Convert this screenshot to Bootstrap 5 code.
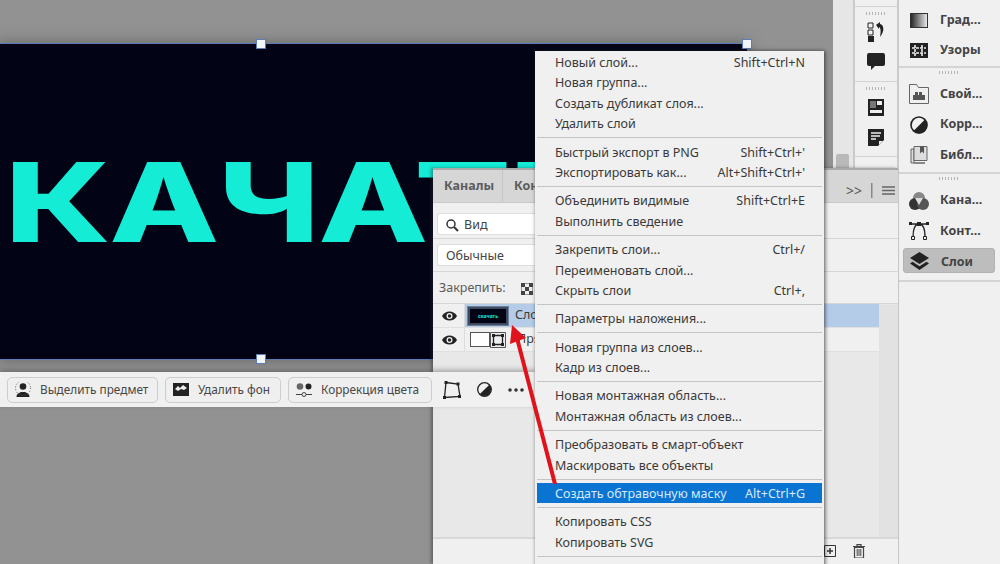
<!DOCTYPE html>
<html lang="ru">
<head>
    <meta charset="UTF-8">
    <title>Создать обтравочную маску</title>
    <link href="https://cdn.jsdelivr.net/npm/bootstrap@5.3.3/dist/css/bootstrap.min.css" rel="stylesheet">
    <style>
        html, body { margin: 0; background: #929292; overflow: hidden; }
        body { font-family: "Noto Sans", "Open Sans", sans-serif; color: #3c3c3c; font-size: 12.5px; }
        .stage { position: relative; width: 1000px; height: 564px; overflow: hidden; }
        .workspace { width: 833px; background: #929292; }
        .strip { width: 20px; background: #e6e6e6; position: relative; }
        .strip-thumb { position: absolute; left: 3px; top: 154px; width: 13px; height: 15px; background: #b9b9b9; border-radius: 2px; }
        .dock-thin { width: 46px; background: #f0f0f0; border-left: 2px solid #cbcbcb; border-right: 2px solid #cbcbcb; }
        .dock-wide { width: 101px; background: #f0f0f0; }
        .dock-thin-group { height: 75px; border-bottom: 1px solid #d2d2d2; padding-top: 5px; }
        .dock-thin-group:first-child { height: 7px; padding: 0; }
        .dock-thin-group svg { display: block; margin: 0 auto 11px; }
        .dock-thin-group.is-roomy svg { margin-bottom: 13px; }
        .dock-thin-group.is-roomy .grip { margin-bottom: 9px; }
        .grip { height: 3px; width: 21px; margin: 0 auto 7px; background: repeating-linear-gradient(90deg, #b5b5b5 0 1px, transparent 1px 3px); }
        .dock-wide-group { border-bottom: 2px solid #d4d4d4; padding: 3px 5px 1px 4px; }
        .dock-wide-group:first-child { padding: 5px 5px 0 4px; }
        .dock-wide-group:last-child { padding-bottom: 7px; }
        .dock-wide-group .grip { margin-bottom: 5px; }
        .dock-wide-group:last-child .grip { margin-bottom: 6px; }
        .dock-item { height: 30.5px; padding-left: 7px; gap: 12px; font-weight: 700; font-size: 12.5px; color: #444; border-radius: 3px; }
        .dock-item svg { flex: none; }
        .dock-item svg[width="20"] { margin: 0 -1px; }
        .dock-item.is-active { height: 25px; margin-top: 1.5px; padding: 3px 0 0 6px; background: #bdbdbd; border: 1px solid #b2b2b2; }
        .dock-item.is-active svg { margin-top: -3px; }

        .art { position: absolute; left: -2px; top: 43px; width: 750px; height: 317px; background: #020314; border: 1px solid #5d7cb4; box-shadow: 0 0 14px rgba(60,60,60,.55); overflow: hidden; }
        .art-title { position: absolute; left: 6px; top: 103px; font-family: Inter, sans-serif; font-weight: 800; font-size: 110px; line-height: 1; letter-spacing: -1px; color: #14ecd6; white-space: nowrap; transform: scaleX(1.3); transform-origin: left top; }
        .handle { position: absolute; width: 10px; height: 10px; background: #f2f5fc; border: 1px solid #5d7cb4; }

        .taskbar { position: absolute; left: 0; top: 372px; width: 536px; height: 35px; background: #f0f0f0; padding-left: 7px; gap: 7px; box-shadow: 0 -2px 5px rgba(60,60,60,.4); }
        .task-btn { height: 26px; padding: 0 0 0 7px; gap: 9px; background: #efefef; border: 1px solid #cdcdcd; border-radius: 5px; color: #474747; white-space: nowrap; --bs-btn-font-size: 11.8px; }
        .task-icons { gap: 16px; margin-left: 4px; }

        .layers { position: absolute; left: 433px; top: 168px; width: 465px; height: 396px; background: #e8e8e8; border-top: 2px solid #a9a9a9; box-shadow: -2px 0 3px rgba(40,40,40,.45); }
        .layers-tabs { height: 33px; background: #d6d6d6; border-bottom: 1px solid #c8c8c8; }
        .tab-name { padding: 0 8px 0 11px; height: 100%; border-right: 1px solid #c6c6c6; font-weight: 700; color: #5c5c5c; font-size: 12.5px; white-space: nowrap; }
        .tab-clip { width: 38px; overflow: hidden; border-right: 0; padding-right: 0; }
        .layers-tools { position: absolute; left: 413px; top: 10px; gap: 9px; color: #555; font-size: 14px; }
        .tool-row { background: #f0f0f0; border-bottom: 1px solid #d6d6d6; padding-left: 4px; }
        .tool-field { width: 98px; height: 22px; background: #fff; border: 1px solid #dedede; border-right: 0; border-radius: 3px 0 0 3px; padding: 2px 0 0 8px; gap: 5px; color: #444; }
        .layer-row { height: 24px; width: 446px; background: #f0f0f0; border-bottom: 1px solid #e0e0e0; }
        .layer-row.is-picked .layer-body { background: #b5cce8; }
        .eye-cell { width: 32px; border-right: 1px solid #dcdcdc; height: 100%; padding-left: 9px; flex: none; }
        .layer-body { padding-left: 3px; height: 100%; gap: 7px; min-width: 0; }
        .layer-thumb { width: 40px; height: 18px; flex: none; background: #020314; border: 2px solid #3e4a5e; outline: 1px solid #6d7f99; font-size: 5px; line-height: 14px; color: #14ecd6; text-align: center; font-weight: 700; }
        .layer-fill { width: 20px; height: 15px; background: #fff; border: 1px solid #555; }
        .layer-name { width: 20px; overflow: hidden; white-space: nowrap; }
        .layer-spacer { position: absolute; left: 446px; top: 135px; width: 19px; height: 259px; background: #e2e2e2; }
        .layers-foot { position: absolute; left: 0; right: 0; bottom: 0; height: 27px; background: #f0f0f0; border-top: 2px solid #d8d8d8; }
        .foot-icons { position: absolute; left: 391px; top: 5px; gap: 17px; }

        .ctx-menu { position: absolute; left: 535px; top: 51px; width: 289px; height: 520px; display: block; background: #f0f0f0; padding: 1px 2px; margin: 0; border: 0; border-radius: 0; box-shadow: 1px 0 4px rgba(30,30,30,.75); --bs-dropdown-min-width: 0; }
        .ctx-menu .dropdown-item { display: flex; justify-content: space-between; height: 20.4px; line-height: 22px; padding: 0 17px 0 18px; font-size: 12.5px; color: #3a3a3a; white-space: nowrap; background: transparent; }
        .ctx-menu .dropdown-item.active { background: #0a74d3; color: #d8e9fb; }
        .ctx-menu .dropdown-divider { margin: 3.5px 0; height: 1px; border: 0; background: #c4c4c4; opacity: 1; }
        .arrow-over { position: absolute; left: 0; top: 0; z-index: 1001; pointer-events: none; }
    </style>
</head>
<body>
<div class="stage d-flex">
    <div class="workspace"></div>
    <div class="strip"><div class="strip-thumb"></div></div>

    <div class="dock-thin">
        <div class="dock-thin-group"></div>
        <div class="dock-thin-group">
            <div class="grip"></div>
            <svg width="18" height="20" viewBox="0 0 18 20"><path d="M1 1h5v5H1zM1 8h5v5H1z" fill="#f0f0f0" stroke="#222"/><path d="M1 14h6v6H1z" fill="#222"/><path d="M9 3l4-3v2c4 1 5 7 0 13 1-5 1-9-1-10v2z" fill="#222"/></svg>
            <svg width="18" height="17" viewBox="0 0 18 17"><path d="M2 0h14a2 2 0 0 1 2 2v9a2 2 0 0 1-2 2H8l-4 4v-4H2a2 2 0 0 1-2-2V2a2 2 0 0 1 2-2z" fill="#222"/></svg>
        </div>
        <div class="dock-thin-group is-roomy">
            <div class="grip"></div>
            <svg width="16" height="17" viewBox="0 0 16 17"><path d="M0 0h16v17H0z" fill="#222"/><path d="M2 2h6v7H2z" fill="#777"/><path d="M9 2h5v4H9z" fill="#eee"/><path d="M2 11h12v3H2z" fill="#eee"/></svg>
            <svg width="16" height="17" viewBox="0 0 16 17"><path d="M0 0h16v11l-6 6H0z" fill="#222"/><path d="M3 4h10M3 7h9M3 10h5" stroke="#eee" stroke-width="1.3"/><path d="M11 16v-4h4z" fill="#eee"/></svg>
        </div>
    </div>

    <div class="dock-wide">
        <div class="dock-wide-group">
            <div class="dock-item d-flex align-items-center">
                <svg width="18" height="15" viewBox="0 0 18 15"><defs><linearGradient id="gradSwatch"><stop offset="0" stop-color="#222"/><stop offset="1" stop-color="#eee"/></linearGradient></defs><rect x=".5" y=".5" width="17" height="14" fill="url(#gradSwatch)" stroke="#333"/></svg>
                <span>Град...</span>
            </div>
            <div class="dock-item d-flex align-items-center">
                <svg width="18" height="15" viewBox="0 0 18 15"><path d="M0 0h18v15H0z" fill="#222"/><path d="M5 2v11M12 2v11M2 5h14M2 10h14" stroke="#eee" stroke-width="1.6" stroke-dasharray="3 1"/></svg>
                <span>Узоры</span>
            </div>
        </div>
        <div class="dock-wide-group">
            <div class="grip"></div>
            <div class="dock-item d-flex align-items-center">
                <svg width="20" height="20" viewBox="0 0 20 20"><path d="M.5 19.500V.5h7l2 3h10v16z" fill="#f0f0f0" stroke="#666"/><path d="M4 16v-5h2V8h3v3h1V8h3v3h3v5z" fill="#555"/></svg>
                <span>Свой...</span>
            </div>
            <div class="dock-item d-flex align-items-center">
                <svg width="18" height="18" viewBox="0 0 18 18"><circle cx="9" cy="9" r="8" fill="#f0f0f0" stroke="#222" stroke-width="1.6"/><path d="M15 3.400A8 8 0 0 1 3.400 15z" fill="#222"/></svg>
                <span>Корр...</span>
            </div>
            <div class="dock-item d-flex align-items-center">
                <svg width="18" height="18" viewBox="0 0 18 18"><path d="M1 3h3v14h11v-0H1z" fill="#ddd" stroke="#666"/><path d="M4 .5h13v14H4z" fill="#ddd" stroke="#666"/><path d="M10 .5h4v7l-2-2-2 2z" fill="#555"/></svg>
                <span>Библ...</span>
            </div>
        </div>
        <div class="dock-wide-group">
            <div class="grip"></div>
            <div class="dock-item d-flex align-items-center">
                <svg width="20" height="18" viewBox="0 0 20 18"><circle cx="10" cy="6" r="6" fill="#888"/><circle cx="6" cy="12" r="6" fill="#333"/><circle cx="14" cy="12" r="6" fill="#555"/><path d="M6 6h8l-4 7z" fill="#ddd"/></svg>
                <span>Кана...</span>
            </div>
            <div class="dock-item d-flex align-items-center">
                <svg width="20" height="18" viewBox="0 0 20 18"><path d="M4 15C4 7 6 2 10 2s6 5 6 13M1 2h18" fill="none" stroke="#222" stroke-width="1.300"/><path d="M8 0h4v4H8zM0 0h3v3H0zM17 0h3v3h-3z" fill="#222"/><path d="M2.500 14.500h3v3h-3zM14.500 14.500h3v3h-3z" fill="#f0f0f0" stroke="#222"/></svg>
                <span>Конт...</span>
            </div>
            <div class="dock-item is-active d-flex align-items-center">
                <svg width="19" height="18" viewBox="0 0 19 18"><path d="M9.500 0L19 6l-9.500 6L0 6z" fill="#222"/><path d="M2.500 9.800L0 11.500 9.500 18l9.500-6.500-2.500-1.700-7 4.500z" fill="#222"/></svg>
                <span>Слои</span>
            </div>
        </div>
    </div>

    <div class="art">
        <div class="art-title">КАЧАТЬ</div>
    </div>
    <div class="handle" style="left:256px;top:39px"></div>
    <div class="handle" style="left:742px;top:39px"></div>
    <div class="handle" style="left:256px;top:354px"></div>

    <div class="layers">
        <div class="layers-tabs d-flex align-items-center">
            <div class="tab-name d-flex align-items-center">Каналы</div>
            <div class="tab-name tab-clip d-flex align-items-center">Контуры</div>
        </div>
        <div class="layers-tools d-flex align-items-center">
            <span>&gt;&gt;</span>
            <svg width="2" height="15"><rect width="1.500" height="15" fill="#888"/></svg>
            <svg width="13" height="9" viewBox="0 0 13 9"><path d="M0 1h13M0 4.500h13M0 8h13" stroke="#666" stroke-width="1.300"/></svg>
        </div>
        <div class="tool-row d-flex align-items-center" style="height:36px;padding-top:7px">
            <div class="tool-field d-flex align-items-center">
                <svg width="13" height="13" viewBox="0 0 13 13"><circle cx="5" cy="5" r="4" fill="none" stroke="#333" stroke-width="1.500"/><path d="M8 8l4 4" stroke="#333" stroke-width="2"/></svg>
                <span>Вид</span>
            </div>
        </div>
        <div class="tool-row d-flex align-items-center" style="height:33px">
            <div class="tool-field d-flex align-items-center">Обычные</div>
        </div>
        <div class="tool-row d-flex align-items-center gap-3" style="height:32px;padding-left:6px;padding-top:2px">
            <span style="color:#5c5c5c">Закрепить:</span>
            <svg width="12" height="12" viewBox="0 0 12 12"><path d="M0 0h12v12H0z" fill="#eee" stroke="#444"/><path d="M0 0h4v4H0zM8 0h4v4H8zM4 4h4v4H4zM0 8h4v4H0zM8 8h4v4H8z" fill="#444"/></svg>
        </div>
        <div class="layer-row is-picked d-flex align-items-center">
            <div class="eye-cell d-flex align-items-center">
                <svg width="15" height="10" viewBox="0 0 15 10"><path d="M0 5c3-6 12-6 15 0-3 6-12 6-15 0z" fill="#222"/><circle cx="7.500" cy="5" r="3" fill="#f0f0f0"/><circle cx="7.500" cy="5" r="1.700" fill="#222"/></svg>
            </div>
            <div class="layer-body d-flex align-items-center flex-grow-1">
                <div class="layer-thumb">скачать</div>
                <span class="layer-name">Слой 1</span>
            </div>
        </div>
        <div class="layer-row d-flex align-items-center">
            <div class="eye-cell d-flex align-items-center">
                <svg width="15" height="10" viewBox="0 0 15 10"><path d="M0 5c3-6 12-6 15 0-3 6-12 6-15 0z" fill="#222"/><circle cx="7.500" cy="5" r="3" fill="#f0f0f0"/><circle cx="7.500" cy="5" r="1.700" fill="#222"/></svg>
            </div>
            <div class="layer-body d-flex align-items-center flex-grow-1" style="gap:11px;padding-left:5px">
                <div class="d-flex align-items-center">
                    <div class="layer-fill"></div>
                    <svg width="16" height="16" viewBox="0 0 16 16"><path d="M.5.500h15v15H.5z" fill="#eee" stroke="#555"/><path d="M3.500 3.500h9v9h-9z" fill="none" stroke="#222" stroke-width="1.300"/><path d="M2 2h3v3H2zM11 2h3v3h-3zM2 11h3v3H2zM11 11h3v3h-3z" fill="#222"/></svg>
                </div>
                <span class="layer-name">Прямоугольник 1</span>
            </div>
        </div>
        <div class="layer-spacer"></div>
        <div class="layers-foot">
            <div class="foot-icons d-flex align-items-center">
                <svg width="12" height="12" viewBox="0 0 12 12"><path d="M.5.500h11v11H.5z" fill="none" stroke="#333"/><path d="M3 6h6M6 3v6" stroke="#333" stroke-width="1.500"/></svg>
                <svg width="12" height="14" viewBox="0 0 12 14"><path d="M0 2.500h12M4 2.500V.6h4v1.900" fill="none" stroke="#444" stroke-width="1.200"/><path d="M1.500 3.500h9V14h-9z" fill="none" stroke="#444" stroke-width="1.200"/><path d="M4.200 5v7M6 5v7M7.800 5v7" stroke="#444"/></svg>
            </div>
        </div>
    </div>

    <div class="taskbar d-flex align-items-center">
        <button type="button" class="btn task-btn d-flex align-items-center" style="width:151px">
            <svg width="16" height="16" viewBox="0 0 16 16"><circle cx="8" cy="4.500" r="3.300" fill="#222"/><path d="M1.500 15c0-4 3-4 4.500-5h4c1.500 1 4.500 1 4.500 5z" fill="#222"/><circle cx="8" cy="6" r="7.500" fill="none" stroke="#555" stroke-dasharray="1 2"/></svg>
            <span>Выделить предмет</span>
        </button>
        <button type="button" class="btn task-btn d-flex align-items-center" style="width:116px">
            <svg width="16" height="13" viewBox="0 0 16 13"><path d="M0 0h16v13H0z" fill="#222"/><path d="M2 6l3-3 2 2 3-3 4 3-3 2-3-1-3 2z" fill="#eee"/></svg>
            <span>Удалить фон</span>
        </button>
        <button type="button" class="btn task-btn d-flex align-items-center" style="width:144px">
            <svg width="16" height="14" viewBox="0 0 16 14"><circle cx="4" cy="3.500" r="3.300" fill="#666"/><circle cx="12.500" cy="3.500" r="3" fill="#222"/><path d="M0 11.500h6M10 11.500h6" stroke="#444"/><circle cx="8" cy="11.500" r="2" fill="none" stroke="#444"/></svg>
            <span>Коррекция цвета</span>
        </button>
        <div class="task-icons d-flex align-items-center">
            <svg width="18" height="18" viewBox="0 0 18 18"><path d="M3 1.500L15 3l2 12.500L1.500 16.500z" fill="none" stroke="#222" stroke-width="1.300"/><path d="M1.500 0h3v3h-3zM13.500 1.500h3v3h-3zM15 14h3v3h-3zM0 15h3v3H0z" fill="#222"/></svg>
            <svg width="15" height="15" viewBox="0 0 15 15"><circle cx="7.500" cy="7.500" r="6.800" fill="#f0f0f0" stroke="#222" stroke-width="1.300"/><path d="M12.300 2.700A6.800 6.800 0 0 1 2.700 12.300z" fill="#222"/></svg>
            <svg width="16" height="4" viewBox="0 0 16 4"><circle cx="2" cy="2" r="1.800" fill="#333"/><circle cx="8" cy="2" r="1.800" fill="#333"/><circle cx="14" cy="2" r="1.800" fill="#333"/></svg>
        </div>
    </div>

    <div class="ctx-menu dropdown-menu show">
        <a class="dropdown-item" href="#"><span>Новый слой...</span><span>Shift+Ctrl+N</span></a>
        <a class="dropdown-item" href="#"><span>Новая группа...</span></a>
        <a class="dropdown-item" href="#"><span>Создать дубликат слоя...</span></a>
        <a class="dropdown-item" href="#"><span>Удалить слой</span></a>
        <hr class="dropdown-divider">
        <a class="dropdown-item" href="#"><span>Быстрый экспорт в PNG</span><span>Shift+Ctrl+'</span></a>
        <a class="dropdown-item" href="#"><span>Экспортировать как...</span><span>Alt+Shift+Ctrl+'</span></a>
        <hr class="dropdown-divider">
        <a class="dropdown-item" href="#"><span>Объединить видимые</span><span>Shift+Ctrl+E</span></a>
        <a class="dropdown-item" href="#"><span>Выполнить сведение</span></a>
        <hr class="dropdown-divider">
        <a class="dropdown-item" href="#"><span>Закрепить слои...</span><span>Ctrl+/</span></a>
        <a class="dropdown-item" href="#"><span>Переименовать слой...</span></a>
        <a class="dropdown-item" href="#"><span>Скрыть слои</span><span>Ctrl+,</span></a>
        <hr class="dropdown-divider">
        <a class="dropdown-item" href="#"><span>Параметры наложения...</span></a>
        <hr class="dropdown-divider">
        <a class="dropdown-item" href="#"><span>Новая группа из слоев...</span></a>
        <a class="dropdown-item" href="#"><span>Кадр из слоев...</span></a>
        <hr class="dropdown-divider">
        <a class="dropdown-item" href="#"><span>Новая монтажная область...</span></a>
        <a class="dropdown-item" href="#"><span>Монтажная область из слоев...</span></a>
        <hr class="dropdown-divider">
        <a class="dropdown-item" href="#"><span>Преобразовать в смарт-объект</span></a>
        <a class="dropdown-item" href="#"><span>Маскировать все объекты</span></a>
        <hr class="dropdown-divider">
        <a class="dropdown-item active" href="#"><span>Создать обтравочную маску</span><span>Alt+Ctrl+G</span></a>
        <hr class="dropdown-divider">
        <a class="dropdown-item" href="#"><span>Копировать CSS</span></a>
        <a class="dropdown-item" href="#"><span>Копировать SVG</span></a>
        <hr class="dropdown-divider">
    </div>

    <svg class="arrow-over" width="1000" height="564" viewBox="0 0 1000 564">
        <path d="M555 484L517 338" stroke="#e0131c" stroke-width="4" fill="none"/>
        <path d="M512 325L526 338 510 344z" fill="#e0131c"/>
    </svg>
</div>
<script src="https://cdn.jsdelivr.net/npm/bootstrap@5.3.3/dist/js/bootstrap.bundle.min.js"></script>
</body>
</html>
